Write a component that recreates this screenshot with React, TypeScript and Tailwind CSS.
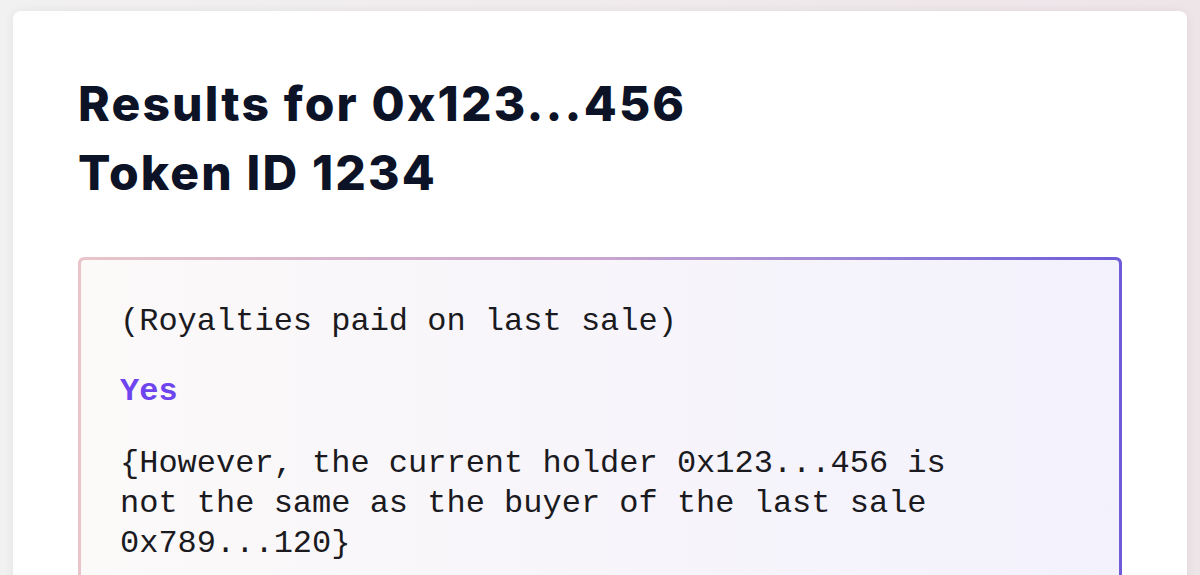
import React from "react";

function ResultCard() {
  return (
    <div className="rounded-[6px] bg-gradient-to-r from-[#e9c5c9] via-[#c9a6cf] to-[#6d5bd9] p-[3px]">
      <div className="rounded-[4px] bg-gradient-to-r from-[#fcf9f9] to-[#f3f1fc] px-[39px] pt-[42px] pb-[60px] font-['Liberation_Mono',monospace] text-[32px] leading-[40px] text-[#1a1a1f]">
        <p>(Royalties paid on last sale)</p>
        <p className="mt-[30px] font-bold text-[#6d44ee]">Yes</p>
        <p className="mt-[32px] max-w-[860px]">
          {"{However, the current holder 0x123...456 is not the same as the buyer of the last sale 0x789...120}"}
        </p>
      </div>
    </div>
  );
}

export default function App() {
  return (
    <div className="h-[575px] overflow-hidden bg-gradient-to-r from-[#f2f1f1] to-[#eee5e9] px-[13px] pt-[11px]">
      <div className="h-[700px] rounded-[8px] bg-white px-[65px] pt-[58px] shadow-[0_0_12px_rgba(0,0,0,0.06)]">
        <h1 className="font-['Inter',sans-serif] text-[48px] font-extrabold leading-[69px] tracking-[0.045em] text-[#0d1326]">
          Results for 0x123...456
          <br />
          Token ID 1234
        </h1>
        <div className="mt-[50px]">
          <ResultCard />
        </div>
      </div>
    </div>
  );
}
